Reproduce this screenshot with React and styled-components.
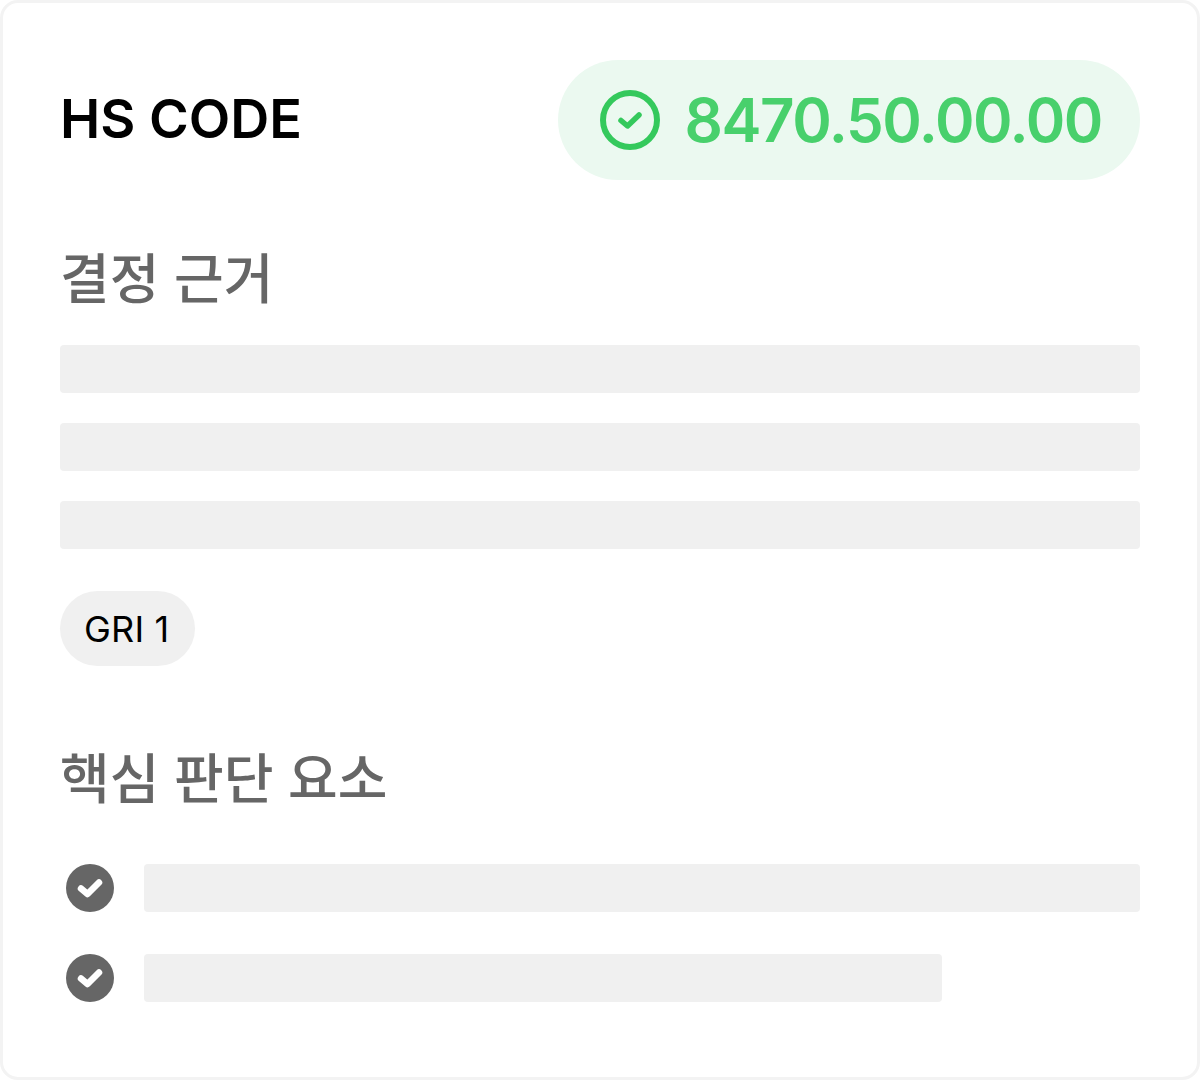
import React from 'react';
import styled, { createGlobalStyle } from 'styled-components';

const GlobalStyle = createGlobalStyle`
    html, body {
        margin: 0;
        padding: 0;
        background: #ffffff;
    }
    * {
        box-sizing: border-box;
    }
`;

const Card = styled.section`
    display: flex;
    flex-direction: column;
    width: 1200px;
    height: 1080px;
    padding: 57px;
    background: #ffffff;
    border: 3px solid #f3f3f3;
    border-radius: 18px;
    font-family: Inter, "Noto Sans CJK KR", sans-serif;
`;

const Header = styled.header`
    display: flex;
    align-items: center;
    justify-content: space-between;
    height: 120px;
`;

const Title = styled.h1`
    margin: 0 0 4px;
    font-size: 54px;
    font-weight: 600;
    color: #000000;
`;

const CodeBadge = styled.div`
    display: flex;
    align-items: center;
    gap: 24px;
    height: 120px;
    padding: 0 38px 0 42px;
    background: #ebf9f0;
    border-radius: 60px;
`;

const Code = styled.span`
    font-size: 60px;
    font-weight: 600;
    letter-spacing: -1.4px;
    color: #48d06c;
`;

const SectionTitle = styled.h2`
    margin: ${(props) => props.$top}px 0 0;
    font-size: 54px;
    line-height: 72px;
    font-weight: 500;
    word-spacing: 2.5px;
    color: #666666;
    font-family: "Noto Sans CJK KR", sans-serif;
`;

const Lines = styled.div`
    display: flex;
    flex-direction: column;
    gap: 30px;
    margin-top: 33px;
`;

const Line = styled.div`
    width: ${(props) => props.$width || '100%'};
    height: 48px;
    background: #f0f0f0;
    border-radius: 4px;
`;

const Chip = styled.span`
    display: flex;
    align-items: center;
    align-self: flex-start;
    height: 75px;
    margin-top: 42px;
    padding: 0 26px 0 24px;
    background: #f0f0f0;
    border-radius: 38px;
    font-size: 36px;
    letter-spacing: 0.2px;
    color: #000000;
`;

const Checks = styled.ul`
    display: flex;
    flex-direction: column;
    gap: 42px;
    margin: 52px 0 0;
    padding: 0;
    list-style: none;
`;

const CheckRow = styled.li`
    display: flex;
    align-items: center;
    gap: 24px;
`;

const CheckIconBox = styled.span`
    display: flex;
    align-items: center;
    justify-content: center;
    flex: none;
    width: 60px;
    height: 48px;
`;

const CircleCheck = () => (
    <svg width="60" height="60" viewBox="0 0 60 60" fill="none">
        <circle cx="30" cy="30" r="27" stroke="#34c95c" strokeWidth="6" />
        <path d="M21 30.5L27.5 36L39 25" stroke="#34c95c" strokeWidth="5.5" strokeLinecap="round" strokeLinejoin="round" />
    </svg>
);

const SolidCheck = () => (
    <svg width="48" height="48" viewBox="0 0 48 48" fill="none">
        <circle cx="24" cy="24" r="24" fill="#666666" />
        <path d="M15 24.5L21.5 30L33 18.5" stroke="#ffffff" strokeWidth="6.5" strokeLinecap="round" strokeLinejoin="round" />
    </svg>
);

const App = () => (
    <>
        <GlobalStyle />
        <Card>
            <Header>
                <Title>HS CODE</Title>
                <CodeBadge>
                    <CircleCheck />
                    <Code>8470.50.00.00</Code>
                </CodeBadge>
            </Header>

            <SectionTitle $top={60}>결정 근거</SectionTitle>
            <Lines>
                <Line />
                <Line />
                <Line />
            </Lines>
            <Chip>GRI 1</Chip>

            <SectionTitle $top={74}>핵심 판단 요소</SectionTitle>
            <Checks>
                <CheckRow>
                    <CheckIconBox><SolidCheck /></CheckIconBox>
                    <Line />
                </CheckRow>
                <CheckRow>
                    <CheckIconBox><SolidCheck /></CheckIconBox>
                    <Line $width="798px" />
                </CheckRow>
            </Checks>
        </Card>
    </>
);

export default App;
